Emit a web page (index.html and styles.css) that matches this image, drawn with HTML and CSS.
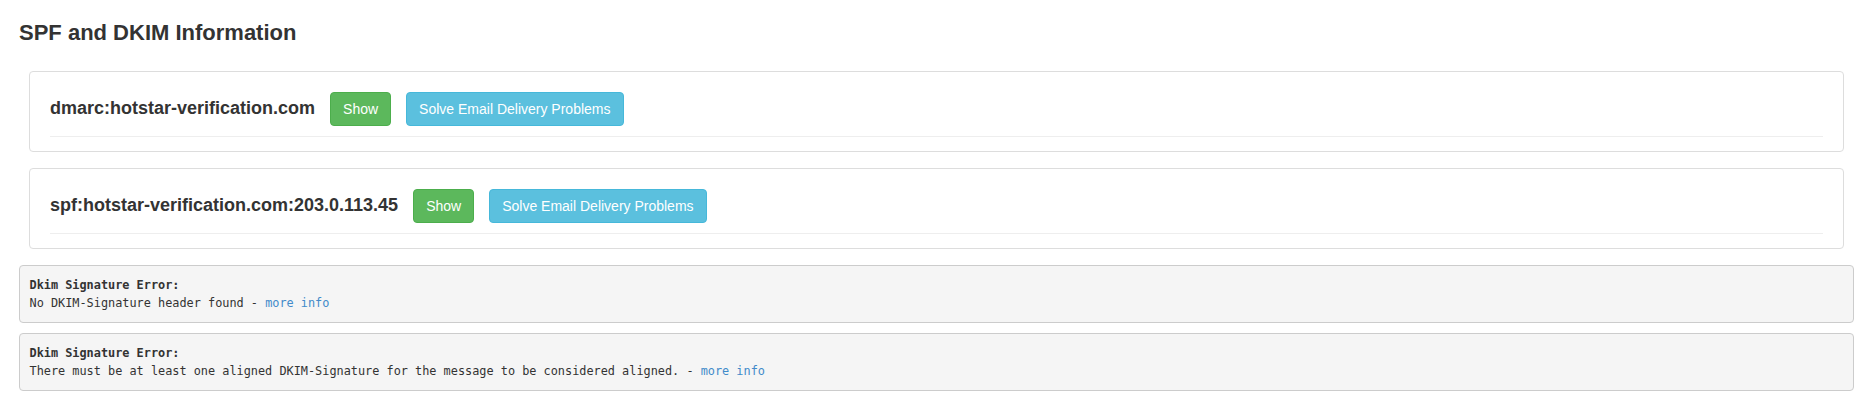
FILE: index.html
```html
<!DOCTYPE html>
<html lang="en">
<head>
<meta charset="utf-8">
<title>SPF and DKIM Information</title>
<link rel="stylesheet" href="styles.css">
</head>
<body>
<div class="container">
  <h3 class="page-title">SPF and DKIM Information</h3>

  <div class="panel">
    <div class="panel-row">
      <h4 class="record-name">dmarc:hotstar-verification.com</h4>
      <button class="btn btn-success">Show</button>
      <button class="btn btn-info">Solve Email Delivery Problems</button>
    </div>
    <hr class="divider">
  </div>

  <div class="panel">
    <div class="panel-row">
      <h4 class="record-name">spf:hotstar-verification.com:203.0.113.45</h4>
      <button class="btn btn-success">Show</button>
      <button class="btn btn-info">Solve Email Delivery Problems</button>
    </div>
    <hr class="divider">
  </div>

  <pre class="error-box"><b>Dkim Signature Error:</b>
No DKIM-Signature header found - <a href="#" class="more-link">more info</a></pre>

  <pre class="error-box"><b>Dkim Signature Error:</b>
There must be at least one aligned DKIM-Signature for the message to be considered aligned. - <a href="#" class="more-link">more info</a></pre>
</div>
</body>
</html>
```

FILE: styles.css
```css
html, body {
  margin: 0;
  padding: 0;
  background: #ffffff;
}

body {
  font-family: "Liberation Sans", Arial, Helvetica, sans-serif;
  font-size: 14px;
  color: #333333;
}

.container {
  margin: 0 16px 0 19px;
  padding-top: 21px;
}

.page-title {
  margin: 0 0 26px 0;
  font-size: 22px;
  line-height: 24px;
  font-weight: bold;
  color: #333333;
}

.panel {
  margin: 0 10px 16px 10px;
  padding: 20px 20px 14px 20px;
  border: 1px solid #dddddd;
  border-radius: 4px;
  background: #ffffff;
}

.panel-row {
  display: flex;
  align-items: baseline;
  gap: 15px;
}

.record-name {
  margin: 0;
  font-size: 18px;
  line-height: 20px;
  font-weight: bold;
  color: #333333;
}

.btn {
  font-family: "Liberation Sans", Arial, Helvetica, sans-serif;
  font-size: 14px;
  line-height: 20px;
  padding: 6px 12px;
  border: 1px solid transparent;
  border-radius: 4px;
  color: #ffffff;
  cursor: pointer;
}

.btn-success {
  background: #5cb85c;
  border-color: #4cae4c;
}

.btn-info {
  background: #5bc0de;
  border-color: #46b8da;
}

.divider {
  margin: 10px 0 0 0;
  border: 0;
  border-top: 1px solid #eeeeee;
  height: 0;
}

.error-box {
  margin: 0 0 10px 0;
  padding: 9.5px;
  border: 1px solid #cccccc;
  border-radius: 4px;
  background: #f5f5f5;
  font-family: "DejaVu Sans Mono", "Liberation Mono", monospace;
  font-size: 11.86px;
  line-height: 18.57px;
  color: #333333;
  white-space: pre-wrap;
}

.error-box b {
  font-weight: bold;
}

.more-link {
  color: #428bca;
  text-decoration: none;
}
```
